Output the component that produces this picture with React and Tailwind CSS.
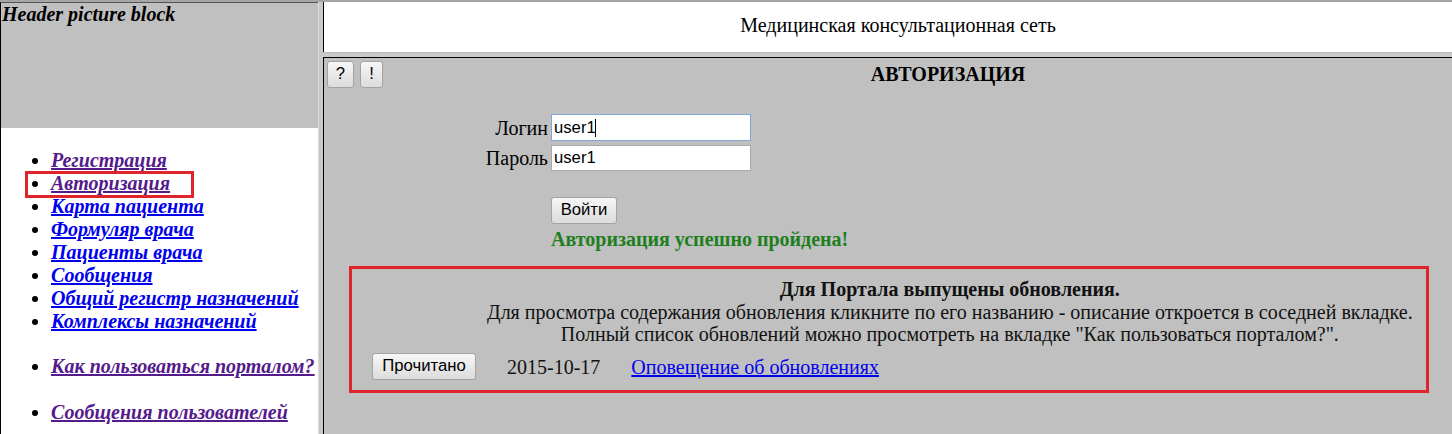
const MENU_MAIN = [
  { label: 'Регистрация', visited: true },
  { label: 'Авторизация', visited: true },
  { label: 'Карта пациента' },
  { label: 'Формуляр врача' },
  { label: 'Пациенты врача' },
  { label: 'Сообщения' },
  { label: 'Общий регистр назначений' },
  { label: 'Комплексы назначений' },
];

function MenuLink({ label, visited }) {
  return (
    <li className="h-[23px] leading-[23px]">
      <a
        href="#"
        className={
          'font-bold italic underline ' +
          (visited ? 'text-[#551a8b]' : 'text-[#0000ee]')
        }
      >
        {label}
      </a>
    </li>
  );
}

function OldButton({ children, className = '' }) {
  return (
    <button
      type="button"
      className={
        'flex items-center justify-center rounded-[3px] border border-[#a3a3a3] bg-gradient-to-b from-[#f7f7f7] to-[#dcdcdc] text-[16.7px] text-black leading-none ' +
        className
      }
      style={{ fontFamily: '"Liberation Sans", Arial, sans-serif' }}
    >
      {children}
    </button>
  );
}

function LeftFrame() {
  return (
    <div className="relative w-[318px] shrink-0 bg-white border-l border-black border-t border-t-[#555555] flex flex-col">
      {/* Header picture block */}
      <div className="h-[125px] bg-[#c0c0c0] pl-[1px] font-bold italic text-[20px] leading-[23px] text-black">
        Header picture block
      </div>

      <ul className="mt-[21px] pl-[50px] list-disc text-[20px]">
        {MENU_MAIN.map((m) => (
          <MenuLink key={m.label} {...m} />
        ))}
      </ul>
      <ul className="mt-[22px] pl-[50px] list-disc text-[20px]">
        <MenuLink label="Как пользоваться порталом?" visited />
      </ul>
      <ul className="mt-[23px] pl-[50px] list-disc text-[20px]">
        <MenuLink label="Сообщения пользователей" visited />
      </ul>

      {/* annotation box */}
      <div className="absolute left-[24px] top-[168px] w-[169px] h-[27px] border-[3px] border-[#e0242c]" />
    </div>
  );
}

function LoginForm() {
  return (
    <div className="mt-[26px] ml-[124px] flex flex-col">
      <div className="flex items-center h-[27px]">
        <div className="w-[100px] text-right text-[20px]">Логин</div>
        <div className="relative ml-[3px]">
          <input
            readOnly
            value="user1"
            className="w-[200px] h-[27px] bg-white border border-[#7ea6d6] px-[2px] text-[16.7px] text-black outline-none"
            style={{ fontFamily: '"Liberation Sans", Arial, sans-serif' }}
          />
          <span className="absolute left-[44px] top-[5px] w-px h-[18px] bg-black" />
        </div>
      </div>
      <div className="flex items-center h-[27px] mt-[3px]">
        <div className="w-[100px] text-right text-[20px]">Пароль</div>
        <input
          readOnly
          value="user1"
          className="ml-[3px] w-[200px] h-[26px] bg-white border border-[#a9a9a9] px-[2px] text-[16.7px] text-black outline-none"
          style={{ fontFamily: '"Liberation Sans", Arial, sans-serif' }}
        />
      </div>
      <div className="ml-[103px] mt-[26px]">
        <OldButton className="w-[66px] h-[27px]">Войти</OldButton>
        <div className="mt-[4px] text-[20px] leading-[23px] font-bold text-[#1e7f1e]">
          Авторизация успешно пройдена!
        </div>
      </div>
    </div>
  );
}

function UpdateNotice() {
  return (
    <div className="mt-[15px] ml-[25px] w-[1080px] h-[127px] border-[3px] border-[#e0242c] pt-[9px]">
      <div className="ml-[135px] w-fit text-center text-[20px] leading-[22.5px] text-[#111]">
        <div className="font-bold">Для Портала выпущены обновления.</div>
        <div>
          Для просмотра содержания обновления кликните по его названию - описание откроется в соседней вкладке.
        </div>
        <div>Полный список обновлений можно просмотреть на вкладке "Как пользоваться порталом?".</div>
      </div>
      <div className="mt-[6px] ml-[20px] flex items-center gap-[31px] text-[20px]">
        <OldButton className="w-[104px] h-[27px]">Прочитано</OldButton>
        <span className="text-[#111]">2015-10-17</span>
        <a href="#" className="text-[#0000ee] underline">
          Оповещение об обновлениях
        </a>
      </div>
    </div>
  );
}

export default function App() {
  return (
    <div
      className="w-[1452px] h-[434px] overflow-hidden bg-[#cbcbcb] flex flex-col text-black"
      style={{ fontFamily: '"Liberation Serif", "Times New Roman", serif' }}
    >
      <div className="h-[2px] bg-[#a6a6a6]" />
      <div className="flex flex-1 min-h-0">
        <LeftFrame />
        {/* frame border */}
        <div className="w-[5px] shrink-0 border-l border-[#dadada] bg-[#c8c8c8]" />

        <div className="flex-1 flex flex-col">
          {/* top frame */}
          <div className="h-[50px] bg-white border-l border-black pt-[12px] pl-[20px] text-center text-[20px] leading-[23px]">
            Медицинская консультационная сеть
          </div>
          <div className="h-[5px] border-t border-[#b8b8b8] bg-[#cbcbcb]" />

          {/* main frame */}
          <div className="flex-1 bg-[#c0c0c0] border-l border-t border-black">
            <div className="flex items-start pt-[3px] pl-[3px]">
              <OldButton className="w-[27px] h-[27px]">?</OldButton>
              <OldButton className="ml-[6px] w-[23px] h-[27px]">!</OldButton>
              <div className="flex-1 pl-[61px] pt-[2px] text-center text-[20px] leading-[23px] font-bold">
                АВТОРИЗАЦИЯ
              </div>
            </div>

            <LoginForm />
            <UpdateNotice />
          </div>
        </div>
      </div>
    </div>
  );
}
